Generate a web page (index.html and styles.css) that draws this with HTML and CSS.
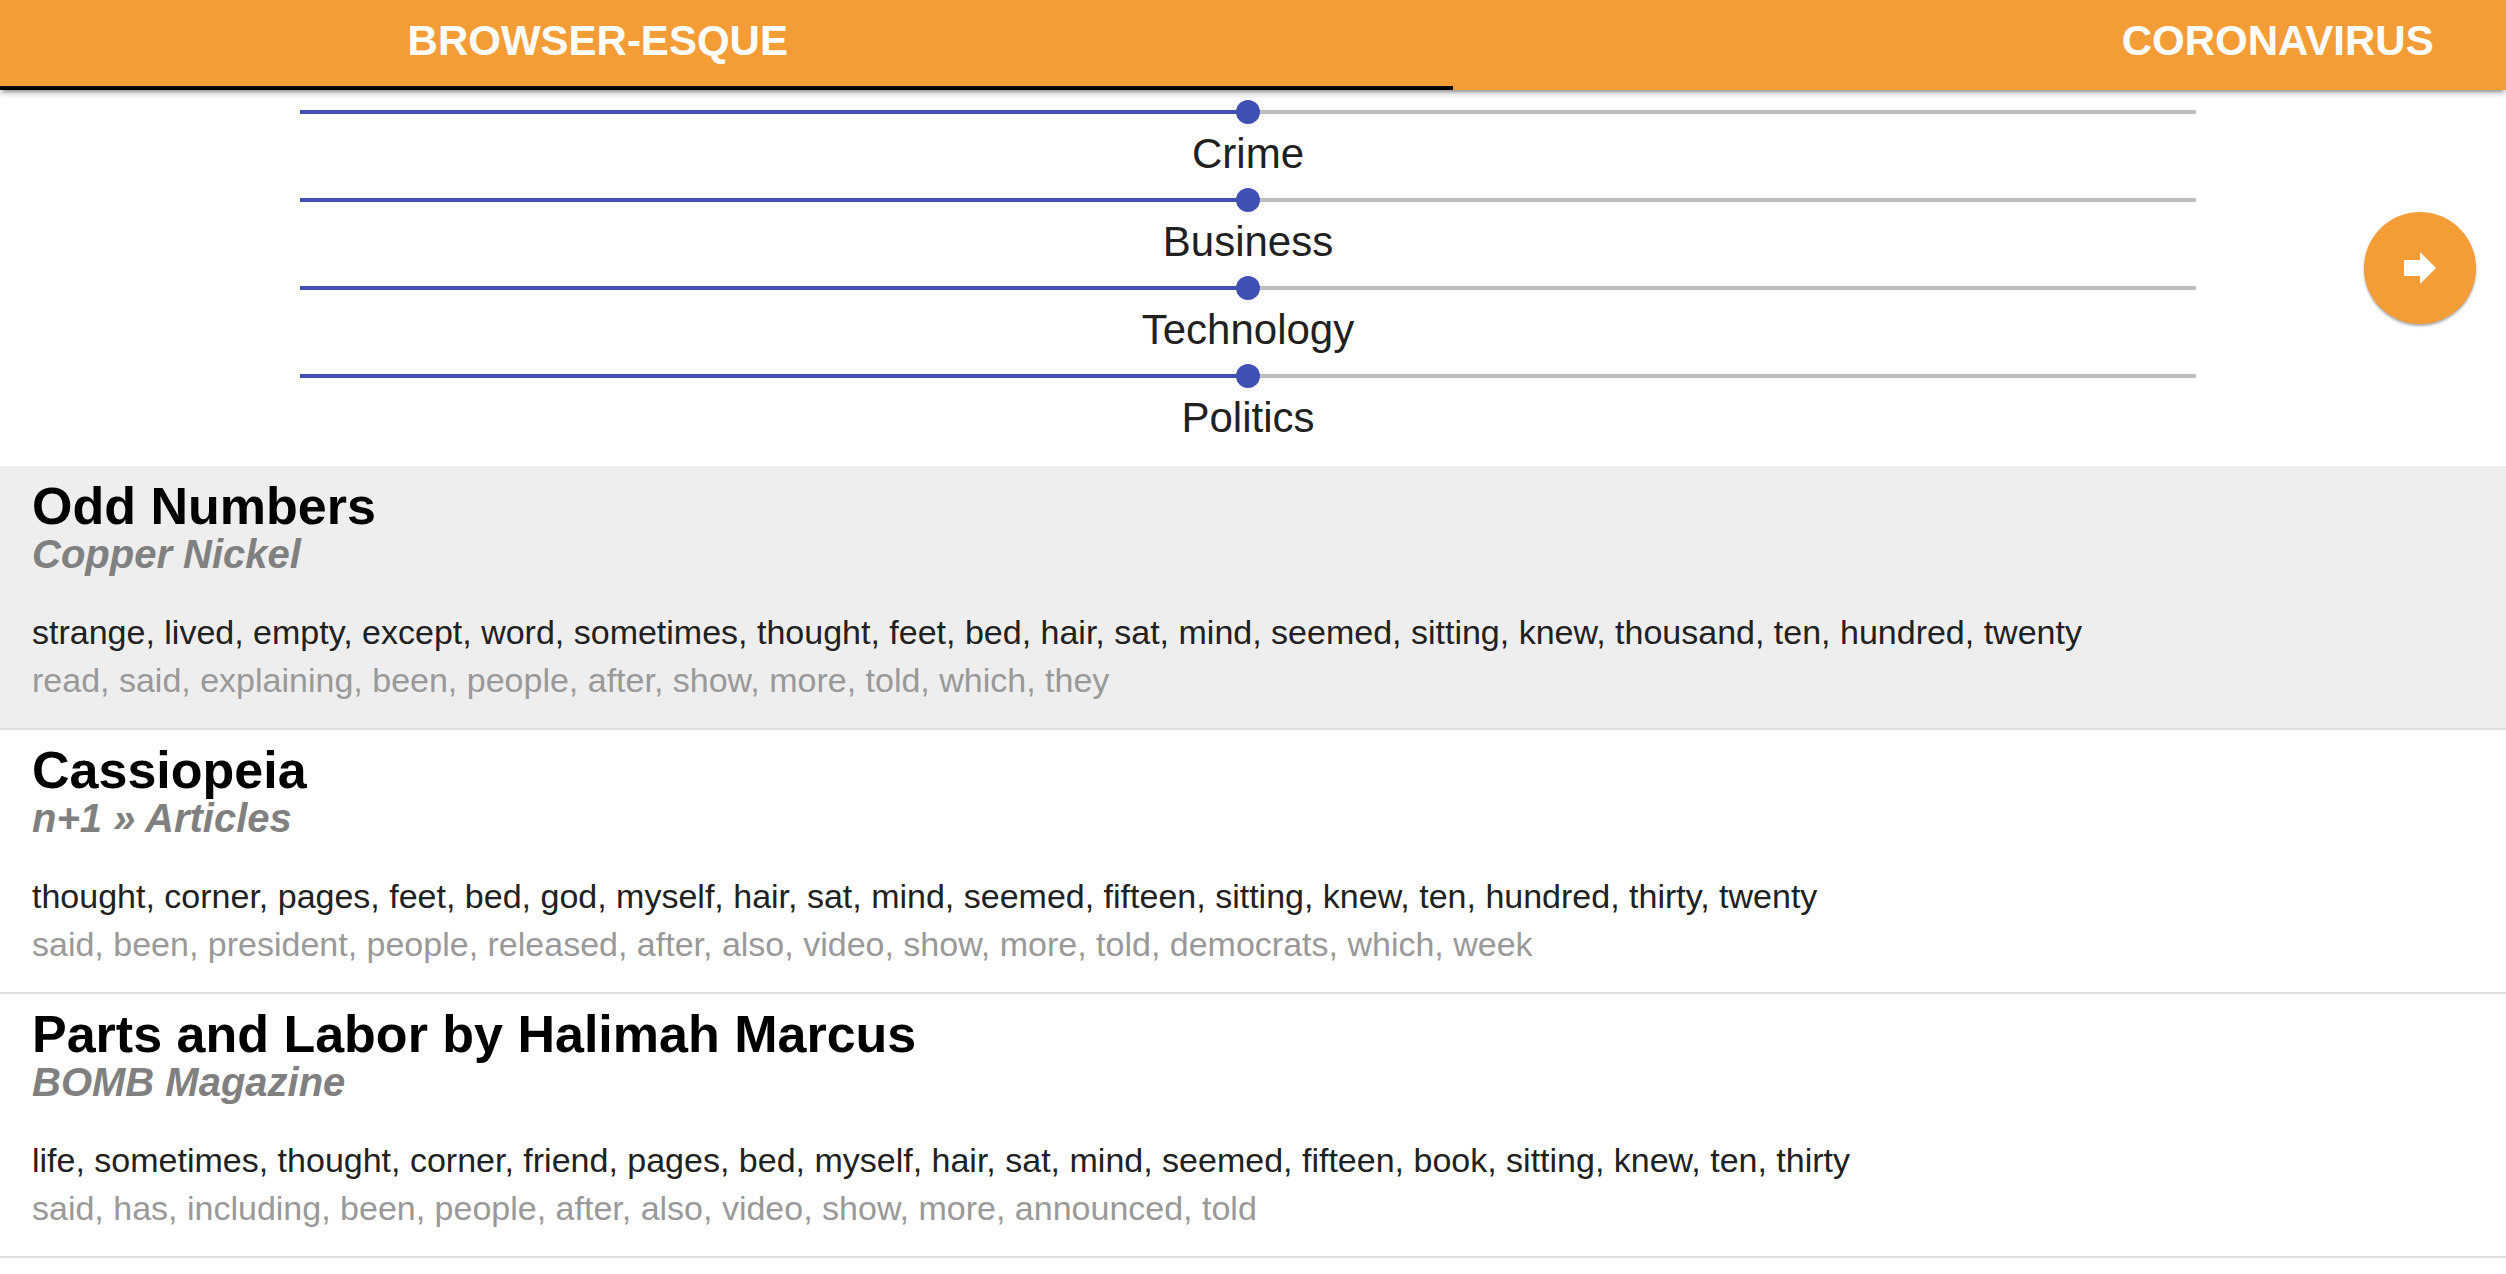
FILE: index.html
```html
<!DOCTYPE html>
<html lang="en">
<head>
  <meta charset="utf-8">
  <meta name="viewport" content="width=device-width, initial-scale=1">
  <title>Browser-esque</title>
  <link rel="stylesheet" href="styles.css">
</head>
<body>
  <nav class="tabs">
    <a class="tab tab-active" href="#browser">BROWSER-ESQUE</a>
    <a class="tab tab-next" href="#coronavirus">CORONAVIRUS</a>
  </nav>
  <main>
    <form class="topics">
      <div class="topic">
        <input class="slider" type="range" id="crime" min="0" max="100" value="50">
        <label class="topic-name" for="crime">Crime</label>
      </div>
      <div class="topic">
        <input class="slider" type="range" id="business" min="0" max="100" value="50">
        <label class="topic-name" for="business">Business</label>
      </div>
      <div class="topic">
        <input class="slider" type="range" id="technology" min="0" max="100" value="50">
        <label class="topic-name" for="technology">Technology</label>
      </div>
      <div class="topic">
        <input class="slider" type="range" id="politics" min="0" max="100" value="50">
        <label class="topic-name" for="politics">Politics</label>
      </div>
    </form>
    <section class="articles">
      <article class="article article-selected">
        <h2 class="title">Odd Numbers</h2>
        <h3 class="source">Copper Nickel</h3>
        <p class="words">strange, lived, empty, except, word, sometimes, thought, feet, bed, hair, sat, mind, seemed, sitting, knew, thousand, ten, hundred, twenty</p>
        <p class="words words-muted">read, said, explaining, been, people, after, show, more, told, which, they</p>
      </article>
      <article class="article">
        <h2 class="title">Cassiopeia</h2>
        <h3 class="source">n+1 » Articles</h3>
        <p class="words">thought, corner, pages, feet, bed, god, myself, hair, sat, mind, seemed, fifteen, sitting, knew, ten, hundred, thirty, twenty</p>
        <p class="words words-muted">said, been, president, people, released, after, also, video, show, more, told, democrats, which, week</p>
      </article>
      <article class="article">
        <h2 class="title">Parts and Labor by Halimah Marcus</h2>
        <h3 class="source">BOMB Magazine</h3>
        <p class="words">life, sometimes, thought, corner, friend, pages, bed, myself, hair, sat, mind, seemed, fifteen, book, sitting, knew, ten, thirty</p>
        <p class="words words-muted">said, has, including, been, people, after, also, video, show, more, announced, told</p>
      </article>
    </section>
  </main>
  <button class="next" type="button" aria-label="Next">
    <svg width="32" height="32" viewBox="0 0 32 32" fill="#fff" aria-hidden="true"><path d="M0 8h16V0l16 16-16 16v-8H0z"/></svg>
  </button>
</body>
</html>
```
FILE: styles.css
```css
* {
  box-sizing: border-box;
}

body {
  margin: 0;
  background: #fff;
  color: #212121;
  font-family: "Liberation Sans", Arial, sans-serif;
}

/* Tab bar */
.tabs {
  position: relative;
  display: flex;
  height: 90px;
  overflow-x: clip;
  background: #f49d37;
  box-shadow: 0 4px 4px rgba(0, 0, 0, .14), 0 6px 2px -4px rgba(0, 0, 0, .2), 0 2px 10px rgba(0, 0, 0, .12);
}

.tab {
  padding-top: 4px;
  border-bottom: 4px solid transparent;
  color: #fff;
  font-size: 42px;
  font-weight: bold;
  line-height: 74px;
  text-align: center;
  text-decoration: none;
}

.tab-active {
  width: 58%;
  padding-right: 258px;
  border-bottom-color: #000;
}

.tab-next {
  flex: 1;
  padding-left: 596px;
}

/* Topic sliders */
.topics {
  padding: 10px 310px 14px 300px;
}

.topic {
  display: flex;
  flex-direction: column;
  padding-bottom: 4px;
}

.slider {
  width: 100%;
  height: 24px;
  margin: 0;
  appearance: none;
  background: linear-gradient(to right, #3f51b5 50%, #bdbdbd 50%) center / 100% 4px no-repeat;
}

.slider::-webkit-slider-thumb {
  appearance: none;
  width: 24px;
  height: 24px;
  border-radius: 50%;
  background: #3f51b5;
}

.topic-name {
  font-size: 42px;
  line-height: 60px;
  text-align: center;
}

/* Article list */
.article {
  padding: 16px 32px 24px;
  border-bottom: 2px solid #e0e0e0;
}

.article-selected {
  background: #eee;
}

.title,
.source,
.words {
  margin: 0;
  line-height: 48px;
}

.title {
  color: #000;
  font-size: 52px;
}

.source {
  padding-bottom: 30px;
  color: #808080;
  font-size: 40px;
  font-style: italic;
}

.words {
  font-size: 34px;
}

.words-muted {
  color: #999;
}

/* Floating action button */
.next {
  position: fixed;
  top: 212px;
  right: 30px;
  display: grid;
  place-items: center;
  width: 112px;
  height: 112px;
  padding: 0;
  border: 0;
  border-radius: 50%;
  background: #f49d37;
  box-shadow: 0 2px 3px rgba(0, 0, 0, .24), 0 2px 2px rgba(0, 0, 0, .12);
}
```
